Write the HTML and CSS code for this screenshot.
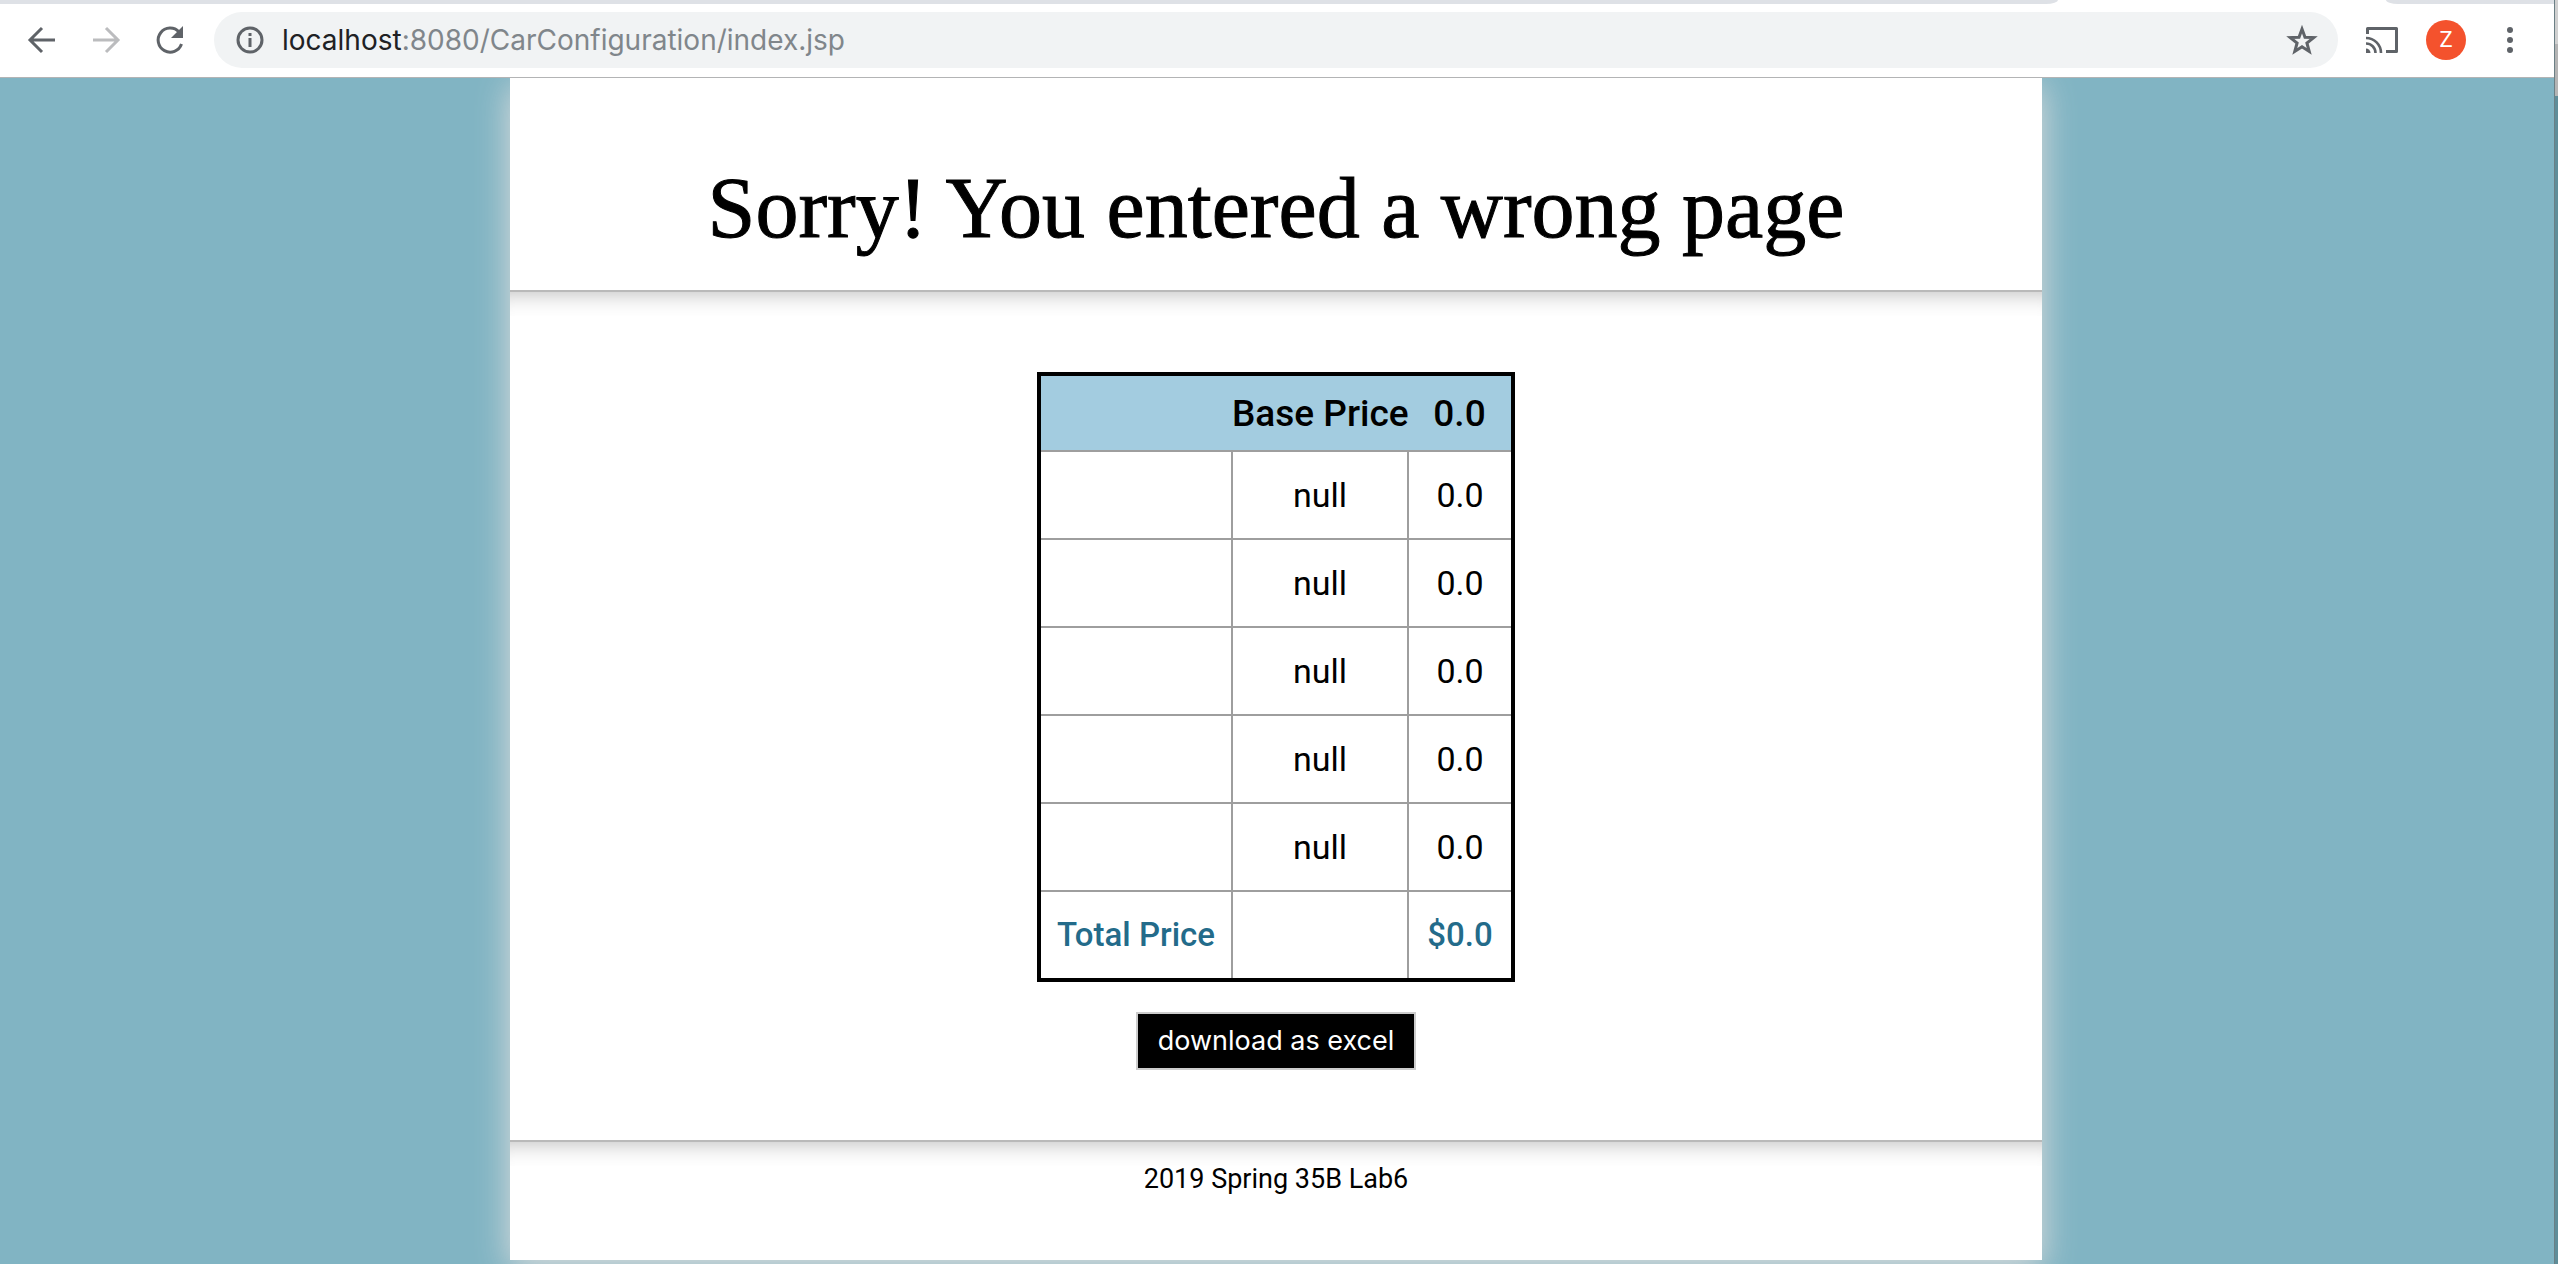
FILE: index.html
```html
<!DOCTYPE html>
<html lang="en">
<head>
<meta charset="utf-8">
<title>Car Configuration</title>
<link rel="stylesheet" href="styles.css">
</head>
<body>
<div class="window">
  <div class="browser">
    <div class="tabs"><span class="tab-strip tab-strip-left"></span><span class="tab-strip tab-strip-right"></span></div>
    <nav class="toolbar" aria-label="Browser toolbar">
      <div class="history">
        <button class="tool" type="button" aria-label="Back"><svg viewBox="0 0 32 32"><path d="M29 16H5M16 4L4 16l12 12" fill="none" stroke="currentColor" stroke-width="3"/></svg></button>
        <button class="tool tool-off" type="button" aria-label="Forward"><svg viewBox="0 0 32 32"><path d="M3 16h24M16 4l12 12-12 12" fill="none" stroke="currentColor" stroke-width="3"/></svg></button>
        <button class="tool" type="button" aria-label="Reload"><svg viewBox="0 0 32 32"><path d="M25 8A12 12 0 1 0 27.500 20" fill="none" stroke="currentColor" stroke-width="3"/><path d="M29 2v12H17z" fill="currentColor"/></svg></button>
      </div>
      <div class="omnibox">
        <svg class="info" viewBox="0 0 28 28"><circle cx="14" cy="14" r="12" fill="none" stroke="currentColor" stroke-width="3"/><path d="M12.500 12h3v9h-3zM12.500 7h3v3h-3z" fill="currentColor"/></svg>
        <span class="url"><b>localhost</b>:8080/CarConfiguration/index.jsp</span>
        <button class="tool" type="button" aria-label="Bookmark"><svg viewBox="0 0 32 32"><path d="M16 5l3 8.200 8.700.4-6.800 5.400 2.300 8.400L16 22.700l-7.200 4.700 2.300-8.400-6.800-5.400 8.700-.4z" fill="none" stroke="currentColor" stroke-width="3"/></svg></button>
      </div>
      <button class="tool" type="button" aria-label="Cast"><svg viewBox="0 0 32 32"><path d="M1.500 10V4.500h29v23H20" fill="none" stroke="currentColor" stroke-width="3" stroke-linejoin="round"/><path d="M0 24.500a4.500 4.500 0 0 1 4.500 4.500H0z" fill="currentColor"/><path d="M0 19.500A9.500 9.500 0 0 1 9.500 29M0 14A15 15 0 0 1 15 29" fill="none" stroke="currentColor" stroke-width="2.600"/></svg></button>
      <button class="avatar" type="button">Z</button>
      <button class="tool" type="button" aria-label="Menu"><svg viewBox="0 0 32 32"><g fill="currentColor"><circle cx="16" cy="6" r="3"/><circle cx="16" cy="16" r="3"/><circle cx="16" cy="26" r="3"/></g></svg></button>
    </nav>
    <div class="viewport">
      <main class="card">
        <h1 class="title">Sorry! You entered a wrong page</h1>
        <hr class="rule">
        <section class="content">
          <table class="prices">
            <colgroup><col class="col-option"><col class="col-choice"><col class="col-price"></colgroup>
            <thead><tr><th></th><th>Base Price</th><th>0.0</th></tr></thead>
            <tbody>
              <tr><td></td><td>null</td><td>0.0</td></tr>
              <tr><td></td><td>null</td><td>0.0</td></tr>
              <tr><td></td><td>null</td><td>0.0</td></tr>
              <tr><td></td><td>null</td><td>0.0</td></tr>
              <tr><td></td><td>null</td><td>0.0</td></tr>
            </tbody>
            <tfoot><tr><td>Total Price</td><td></td><td>$0.0</td></tr></tfoot>
          </table>
          <button class="download" type="button">download as excel</button>
        </section>
        <hr class="rule">
        <footer class="footer">2019 Spring 35B Lab6</footer>
      </main>
    </div>
  </div>
  <div class="edge"></div>
</div>
</body>
</html>
```

FILE: styles.css
```css
* { box-sizing: border-box; }
body { margin: 0; font-family: Roboto, "Liberation Sans", sans-serif; color: #000; }
button { font: inherit; border: 0; padding: 0; background: none; }
.window { display: flex; min-height: 100vh; }
.browser { flex: 1; display: flex; flex-direction: column; min-width: 0; background: #fff; }
.edge { width: 4px; background: linear-gradient(#d0d0d0 44px, #b4b4b4 44px 96px, #5f8d99 96px); border-left: 1px solid #6b7f85; }

.tabs { display: flex; justify-content: space-between; height: 4px; }
.tab-strip { background: #dee1e6; }
.tab-strip-left { width: 2058px; border-bottom-right-radius: 12px 4px; }
.tab-strip-right { width: 168px; border-bottom-left-radius: 12px 4px; }

.toolbar { display: flex; align-items: center; gap: 28px; height: 74px; padding: 0 28px 2px 26px; border-bottom: 1px solid #b3b4b5; color: #5f6368; }
.history { display: flex; gap: 32px; }
.tool { display: flex; color: inherit; }
.tool svg { width: 32px; height: 32px; }
.tool-off { color: #bbbcbe; }
.omnibox { flex: 1; display: flex; align-items: center; gap: 18px; height: 56px; padding: 0 20px 0 22px; border-radius: 28px; background: #f1f3f4; }
.info { width: 28px; height: 28px; }
.url { flex: 1; font: 28px/40px Inter, sans-serif; color: #80868b; }
.url b { font-weight: 400; color: #202124; }
.avatar { width: 40px; height: 40px; border-radius: 50%; background: #f4522d; color: #fff; font-size: 22px; }

.viewport { flex: 1; padding-right: 2px; background: #81b4c3; overflow: hidden; }
.card { width: 60%; margin: 0 auto; background: #fff; box-shadow: 0 8px 32px #ddd; text-align: center; }
.title { margin: 0; padding: 82px 0 34px; font: 500 86px/96px "Liberation Serif", serif; -webkit-text-stroke: 1px #000; }
.rule { height: 26px; margin: 0; border: 0; border-top: 2px solid #b9b9b9; box-shadow: inset 0 24px 24px -24px rgba(0, 0, 0, .3); }
.content { display: flex; flex-direction: column; align-items: center; gap: 30px; padding: 56px 0 70px; }
.prices { width: 478px; table-layout: fixed; border-collapse: collapse; border: 4px solid #000; font-size: 34px; line-height: 40px; }
.col-option { width: 193px; }
.col-choice { width: 176px; }
.prices th, .prices td { padding: 0; height: 88px; white-space: nowrap; }
.prices td { border: 2px solid #9e9e9e; }
.prices th { height: 77px; padding-top: 2px; background: #a3cce0; font-size: 37px; font-weight: 500; }
.prices tfoot td { height: 89px; color: #236b8a; font-size: 33px; font-weight: 500; }
.download { width: 280px; height: 58px; border: 2px solid #ccc; background: #000; color: #fff; font: 27px/40px Inter, sans-serif; }
.footer { padding: 0 0 68px; font-size: 27px; line-height: 26px; }
```
